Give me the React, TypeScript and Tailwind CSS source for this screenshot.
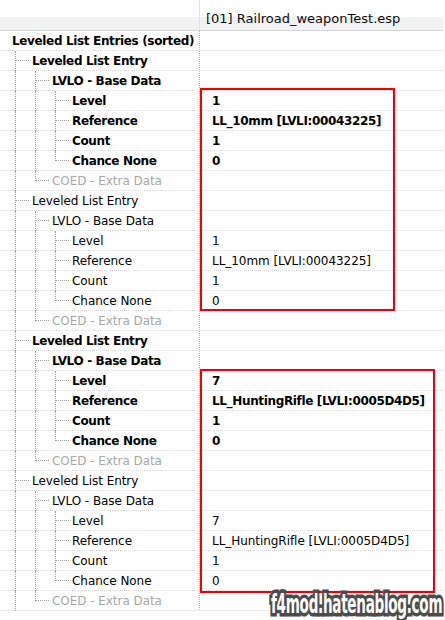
import React from "react";

type Guide = "full" | "half";

type Row = {
  label: string;
  value?: string;
  level: number;
  bold?: boolean;
  muted?: boolean;
  guides: Guide[];
};

const entries = [
  { bold: true, level: "1", ref: "LL_10mm [LVLI:00043225]" },
  { bold: false, level: "1", ref: "LL_10mm [LVLI:00043225]" },
  { bold: true, level: "7", ref: "LL_HuntingRifle [LVLI:0005D4D5]" },
  { bold: false, level: "7", ref: "LL_HuntingRifle [LVLI:0005D4D5]" },
];

function buildRows(): Row[] {
  const rows: Row[] = [
    { label: "Leveled List Entries (sorted)", level: 0, bold: true, guides: [] },
  ];
  for (const e of entries) {
    rows.push({ label: "Leveled List Entry", level: 1, bold: e.bold, guides: ["full"] });
    rows.push({ label: "LVLO - Base Data", level: 2, bold: e.bold, guides: ["full", "full"] });
    const fields: [string, string][] = [
      ["Level", e.level],
      ["Reference", e.ref],
      ["Count", "1"],
      ["Chance None", "0"],
    ];
    fields.forEach(([label, value], i) => {
      rows.push({
        label,
        value,
        level: 3,
        bold: e.bold,
        guides: ["full", "full", i === fields.length - 1 ? "half" : "full"],
      });
    });
    rows.push({ label: "COED - Extra Data", level: 2, muted: true, guides: ["full", "half"] });
  }
  return rows;
}

const verticalX = ["left-[15px]", "left-[35px]", "left-[55px]"];
const connectorX = ["left-[16px]", "left-[36px]", "left-[56px]"];
const textIndent = ["pl-[12px]", "pl-[32px]", "pl-[52px]", "pl-[72px]"];

const weight = (bold?: boolean) =>
  bold ? "font-bold tracking-[-0.35px]" : "font-normal tracking-[-0.05px]";

function TreeCell({ row }: { row: Row }) {
  return (
    <div className="relative h-full w-[200px] shrink-0 border-r border-dotted border-r-[#b8b8b8]">
      {row.guides.map((g, i) => (
        <span
          key={i}
          className={`absolute top-0 ${verticalX[i]} border-l border-dotted border-l-[#a0a0a0] ${
            g === "full" ? "h-[20px]" : "h-[10px]"
          }`}
        />
      ))}
      {row.level > 0 && (
        <span
          className={`absolute top-[9px] ${connectorX[row.level - 1]} w-[13px] border-t border-dotted border-t-[#a0a0a0]`}
        />
      )}
      <div
        className={`flex h-full items-center whitespace-nowrap ${textIndent[row.level]} ${weight(
          row.bold
        )} ${row.muted ? "text-[#a8a8a8]" : "text-black"}`}
      >
        {row.label}
      </div>
    </div>
  );
}

export default function App() {
  const rows = buildRows();
  return (
    <div className="relative h-[620px] w-[445px] overflow-hidden bg-white font-['DejaVu_Sans',sans-serif] text-[12px] text-black">
      <div className="w-[443px]">
        {/* column header */}
        <div className="flex h-[31px] border-b border-[#d5d5d5] bg-[linear-gradient(to_bottom,#ffffff_0,#ffffff_56%,#f1f2f4_56%,#f1f2f4_100%)]">
          <div className="h-full w-[200px] shrink-0 border-r border-[#e2e3e5]" />
          <div className="flex h-full items-center pl-[6px] pt-[8px] text-[13px] tracking-[0px] text-[#0c0c0c]">
            [01] Railroad_weaponTest.esp
          </div>
        </div>

        {rows.map((row, i) => (
          <div
            key={i}
            className="box-border flex h-[20px] border-b border-dotted border-b-[#d8d8d8]"
          >
            <TreeCell row={row} />
            <div
              className={`flex h-[19px] items-center whitespace-nowrap pl-[12px] ${weight(row.bold)}`}
            >
              {row.value ?? ""}
            </div>
          </div>
        ))}
      </div>

      {/* highlight frames */}
      <div className="absolute left-[200px] top-[88px] h-[223px] w-[195px] border-2 border-[#f00000]" />
      <div className="absolute left-[200px] top-[369px] h-[224px] w-[235px] border-2 border-[#f00000]" />

      {/* blog watermark */}
      <div className="absolute right-[3px] top-[589px] origin-right scale-x-[0.58] whitespace-nowrap font-['DejaVu_Sans_Condensed','DejaVu_Sans',sans-serif] text-[26px] font-bold leading-[30px] tracking-[-0.5px] text-white [-webkit-text-stroke:7px_#4b4b4b] [paint-order:stroke_fill]">
        f4mod.hatenablog.com
      </div>
    </div>
  );
}
